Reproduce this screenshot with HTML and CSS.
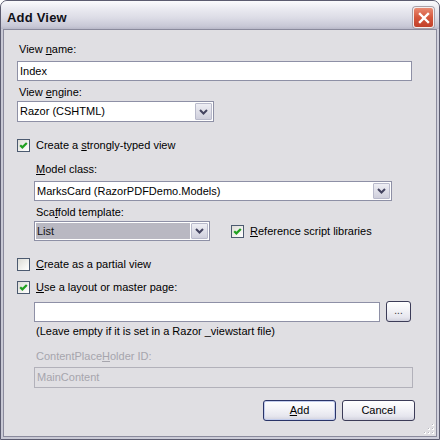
FILE: index.html
```html
<!DOCTYPE html>
<html>
<head>
<meta charset="utf-8">
<title>Add View</title>
<link rel="stylesheet" href="styles.css">
</head>
<body>
<div class="window">
  <div class="titlebar">
    <span class="title">Add View</span>
    <span class="close">
      <svg width="18" height="18" viewBox="0 0 18 18"><path d="M5 5 L13 13 M13 5 L5 13" stroke="#fff" stroke-width="2.4" stroke-linecap="square" fill="none"/></svg>
    </span>
  </div>
  <div class="frame">
    <div class="content">
      <div class="label name-label">View <u>n</u>ame:</div>
      <div class="field name-field"><span class="val">Index</span></div>

      <div class="label engine-label">View <u>e</u>ngine:</div>
      <div class="combo engine-combo">
        <span class="val">Razor (CSHTML)</span>
        <span class="drop"><svg width="9" height="6" viewBox="0 0 9 6"><path d="M1 1 L4.5 4.5 L8 1" stroke="#444460" stroke-width="2" fill="none"/></svg></span>
      </div>

      <div class="check typed-check">
        <span class="box"><svg width="11" height="11" viewBox="0 0 11 11"><path d="M2.2 5.2 L4.4 7.4 L8.8 3" stroke="#21a121" stroke-width="2.2" fill="none"/></svg></span>
        <span>Create a <u>s</u>trongly-typed view</span>
      </div>

      <div class="indent">
        <div class="label model-label"><u>M</u>odel class:</div>
        <div class="combo model-combo">
          <span class="val">MarksCard (RazorPDFDemo.Models)</span>
          <span class="drop"><svg width="9" height="6" viewBox="0 0 9 6"><path d="M1 1 L4.5 4.5 L8 1" stroke="#444460" stroke-width="2" fill="none"/></svg></span>
        </div>
        <div class="label scaffold-label">Sca<u>f</u>fold template:</div>
        <div class="scaffold-row">
          <div class="combo scaffold-combo">
            <span class="val selected">List</span>
            <span class="drop"><svg width="9" height="6" viewBox="0 0 9 6"><path d="M1 1 L4.5 4.5 L8 1" stroke="#444460" stroke-width="2" fill="none"/></svg></span>
          </div>
          <div class="check ref-check">
            <span class="box"><svg width="11" height="11" viewBox="0 0 11 11"><path d="M2.2 5.2 L4.4 7.4 L8.8 3" stroke="#21a121" stroke-width="2.2" fill="none"/></svg></span>
            <span><u>R</u>eference script libraries</span>
          </div>
        </div>
      </div>

      <div class="check partial-check">
        <span class="box"></span>
        <span><u>C</u>reate as a partial view</span>
      </div>
      <div class="check layout-check">
        <span class="box"><svg width="11" height="11" viewBox="0 0 11 11"><path d="M2.2 5.2 L4.4 7.4 L8.8 3" stroke="#21a121" stroke-width="2.2" fill="none"/></svg></span>
        <span><u>U</u>se a layout or master page:</span>
      </div>

      <div class="indent">
        <div class="layout-row">
          <div class="field layout-field"></div>
          <div class="btn browse">...</div>
        </div>
        <div class="label hint-label">(Leave empty if it is set in a Razor _viewstart file)</div>
        <div class="label disabled cph-label">ContentPlace<u>H</u>older ID:</div>
        <div class="field disabled-field"><span class="val">MainContent</span></div>
      </div>

      <div class="buttons">
        <div class="btn action default"><u>A</u>dd</div>
        <div class="btn action">Cancel</div>
      </div>

      <svg class="grip" width="11" height="11" viewBox="0 0 11 11">
        <rect x="8" y="0" width="2" height="2" fill="#fff"/><rect x="8" y="0" width="1" height="1" fill="#b6b5bd"/>
        <rect x="4" y="4" width="2" height="2" fill="#fff"/><rect x="4" y="4" width="1" height="1" fill="#b6b5bd"/>
        <rect x="8" y="4" width="2" height="2" fill="#fff"/><rect x="8" y="4" width="1" height="1" fill="#b6b5bd"/>
        <rect x="0" y="8" width="2" height="2" fill="#fff"/><rect x="0" y="8" width="1" height="1" fill="#b6b5bd"/>
        <rect x="4" y="8" width="2" height="2" fill="#fff"/><rect x="4" y="8" width="1" height="1" fill="#b6b5bd"/>
        <rect x="8" y="8" width="2" height="2" fill="#fff"/><rect x="8" y="8" width="1" height="1" fill="#b6b5bd"/>
      </svg>
    </div>
  </div>
</div>
</body>
</html>
```
FILE: styles.css
```css
* { box-sizing: border-box; }
html, body { margin: 0; padding: 0; background: #ffffff; }
body {
  font-family: "Liberation Sans", Arial, sans-serif;
  font-size: 11px;
  color: #000;
}
u { text-decoration: underline; text-underline-offset: 1px; }

.window {
  width: 440px;
  height: 440px;
  border: 1px solid #5c5c70;
  border-radius: 7px 7px 0 0;
  background: #c4c4d0;
  display: flex;
  flex-direction: column;
  overflow: hidden;
}

.titlebar {
  height: 28px;
  flex: none;
  display: flex;
  align-items: flex-start;
  justify-content: space-between;
  padding: 0 5px 0 6px;
  background: linear-gradient(#fbfbfd 0%, #ececf2 25%, #dcdce6 60%, #c8c8d6 90%, #b8b8c8 100%);
}
.title {
  margin-top: 9px;
  font-size: 13px;
  line-height: 16px;
  font-weight: bold;
  color: #101018;
  letter-spacing: 0.2px;
}
.close {
  margin-top: 6px;
  width: 21px;
  height: 21px;
  border: 1px solid #f4eeee;
  border-radius: 3px;
  background: linear-gradient(#e98a72, #d4573c 50%, #c2402a);
  box-shadow: 0 0 0 1px #a8a0a8;
  display: flex;
  align-items: center;
  justify-content: center;
}

.frame {
  flex: 1;
  display: flex;
  padding: 0 2px 2px;
  background: linear-gradient(90deg, #c8c8d4, #d0d0dc);
}
.content {
  position: relative;
  flex: 1;
  border: 1px solid #8a8a9c;
  background: #e0dfe3;
  padding: 13px 21px 0 13px;
  display: flex;
  flex-direction: column;
}

.label {
  line-height: 13px;
  height: 13px;
  padding-left: 2px;
  white-space: nowrap;
}
.label.disabled { color: #a6a5ad; }

.field, .combo {
  position: relative;
  height: 20px;
  border: 1px solid #8e90a6;
  background: #fff;
  display: flex;
  align-items: center;
}
.val {
  padding-left: 2px;
  line-height: 13px;
  white-space: nowrap;
}
.combo .val { flex: 1; }
.drop {
  margin: 1px;
  align-self: stretch;
  width: 17px;
  border: 1px solid #b9bacb;
  border-radius: 1px;
  background: linear-gradient(#eeeef4, #dcdce6 60%, #cfcfdc);
  display: flex;
  align-items: center;
  justify-content: center;
}

.name-field { margin-top: 5px; width: 395px; }
.engine-label { margin-top: 5px; }
.engine-combo { margin-top: 2px; width: 197px; height: 21px; }

.check {
  display: flex;
  align-items: center;
  height: 13px;
  line-height: 13px;
  gap: 6px;
  white-space: nowrap;
}
.box {
  width: 13px;
  height: 13px;
  flex: none;
  border: 1px solid #4c5a70;
  background: linear-gradient(135deg, #dcdcd6, #f6f6f4 70%, #ffffff);
  display: flex;
}
.typed-check { margin-top: 17px; }

.indent { padding-left: 17px; display: flex; flex-direction: column; }
.model-label { margin-top: 11px; }
.model-combo { margin-top: 5px; width: 358px; }
.scaffold-label { margin-top: 5px; }
.scaffold-row {
  margin-top: 2px;
  display: flex;
  align-items: center;
  gap: 21px;
}
.scaffold-combo { width: 176px; }
.scaffold-combo .val.selected {
  align-self: stretch;
  margin: 1px 0 1px 1px;
  padding-left: 1px;
  background: #b9b8c2;
  display: flex;
  align-items: center;
  color: #111;
}
.ref-check { margin-top: 1px; }

.partial-check { margin-top: 17px; }
.layout-check { margin-top: 10px; }

.layout-row {
  margin-top: 7px;
  display: flex;
  align-items: flex-start;
  gap: 6px;
}
.layout-field { margin-top: 1px; width: 346px; }

.btn {
  border: 1px solid #3c3c58;
  border-radius: 3px;
  background: linear-gradient(#ffffff, #f4f4f8 40%, #e6e6ee 80%, #d2d2de);
  display: flex;
  align-items: center;
  justify-content: center;
  line-height: 13px;
}
.browse {
  width: 25px;
  height: 21px;
  font-size: 10px;
  padding-bottom: 2px;
  color: #333;
}

.hint-label { margin-top: 3px; }
.cph-label { margin-top: 12px; }
.disabled-field {
  margin-top: 4px;
  width: 379px;
  height: 21px;
  border-color: #b2b1ba;
  background: #e0dfe3;
}
.disabled-field .val { color: #a6a5ad; }

.buttons {
  margin-top: 12px;
  display: flex;
  justify-content: flex-end;
  gap: 6px;
}
.action {
  width: 73px;
  height: 21px;
}
.action.default {
  border-color: #2a3468;
  box-shadow: inset 0 0 0 1px #c3cdec;
}

.grip {
  position: absolute;
  right: 1px;
  bottom: 1px;
}
```
